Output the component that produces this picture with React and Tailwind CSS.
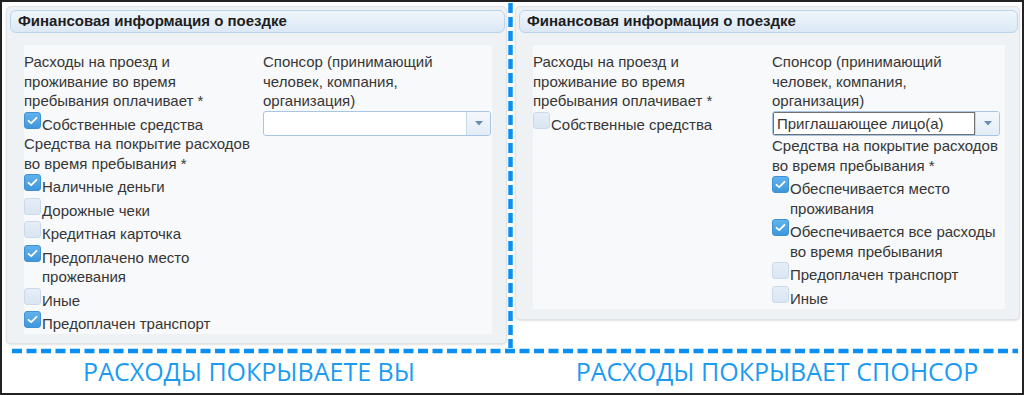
import React from 'react';

const Box = ({ checked }) => (
  <span
    className={`mt-[1px] flex h-[17px] w-[17px] shrink-0 items-center justify-center rounded-[3px] border ${
      checked
        ? 'border-[#3d91d4] bg-gradient-to-b from-[#62b3ec] to-[#3e97db]'
        : 'border-[#cbdaea] bg-gradient-to-b from-[#e6eef7] to-[#d9e5f1]'
    }`}
  >
    {checked && (
      <svg width="11" height="9" viewBox="0 0 11 9">
        <path d="M1.5 4.8 L4.2 7.2 L9.5 1.8" fill="none" stroke="#ffffff" strokeWidth="1.8" strokeLinecap="round" strokeLinejoin="round" />
      </svg>
    )}
  </span>
);

const Option = ({ checked, lines }) => (
  <div className="flex items-start">
    <Box checked={checked} />
    <div className="ml-[1px] pt-[4px]">
      {lines.map((l) => (
        <div key={l} className="whitespace-nowrap">{l}</div>
      ))}
    </div>
  </div>
);

const Lines = ({ lines }) => lines.map((l) => <div key={l} className="whitespace-nowrap">{l}</div>);

const Select = ({ value }) => (
  <div className="mt-[0.5px] flex h-[25px] w-[228px] overflow-hidden rounded-[3px] border border-[#a8c6e4] bg-white">
    <div
      className={`flex flex-1 items-center pl-[3px] ${value ? 'border border-[#707070]' : ''}`}
    >
      {value}
    </div>
    <div className="flex w-[24px] items-center justify-center border-l border-[#c6d8ea] bg-gradient-to-b from-[#f4f8fc] to-[#e3edf7]">
      <svg width="8" height="5" viewBox="0 0 8 5">
        <path d="M0 0 H8 L4 4.5 Z" fill="#6a8db3" />
      </svg>
    </div>
  </div>
);

const Panel = ({ height, left, right }) => (
  <div
    className={`mt-1 flex flex-col rounded-[5px] border border-[#dfe3e8] bg-[#eff2f5] pl-[3px] pr-[1px] pt-[3px] shadow-[0_1px_2px_rgba(0,0,0,0.12)] ${height}`}
  >
    <div className="flex h-[23px] items-center rounded-[6px] border border-[#b9d4ec] bg-gradient-to-b from-[#f0f6fc] to-[#dbe8f5] pl-[7px] text-[15px] font-bold text-[#1e1e1e]">
      Финансовая информация о поездке
    </div>
    <div className="mb-[10px] ml-[14px] mr-[13px] mt-[12px] flex flex-1 bg-[#f8f9fb] pt-[7px] text-[15px] leading-[19.5px] text-[#363636]">
      <div className="w-[239px] shrink-0">{left}</div>
      <div>{right}</div>
    </div>
  </div>
);

export default function App() {
  return (
    <div
      className="h-[395px] w-[1024px] overflow-hidden border-2 border-[#222222] bg-white"
      style={{ fontFamily: '"Liberation Sans", Arial, sans-serif' }}
    >
      <div className="flex items-start pl-1">
        <div className="w-[501px]">
          <Panel
            height="h-[338px]"
            left={
              <>
                <Lines lines={['Расходы на проезд и', 'проживание во время', 'пребывания оплачивает *']} />
                <Option checked lines={['Собственные средства']} />
                <Lines lines={['Средства на покрытие расходов', 'во время пребывания *']} />
                <Option checked lines={['Наличные деньги']} />
                <Option lines={['Дорожные чеки']} />
                <Option lines={['Кредитная карточка']} />
                <Option checked lines={['Предоплачено место', 'прожевания']} />
                <Option lines={['Иные']} />
                <Option checked lines={['Предоплачен транспорт']} />
              </>
            }
            right={
              <>
                <Lines lines={['Спонсор (принимающий', 'человек, компания,', 'организация)']} />
                <Select />
              </>
            }
          />
        </div>
        <svg className="ml-[1px] shrink-0" width="5" height="346" viewBox="0 0 5 346">
          <line x1="2.5" y1="1" x2="2.5" y2="346" stroke="#0b8ff2" strokeWidth="4.5" strokeDasharray="10 4" />
        </svg>
        <div className="ml-[2px] w-[505px]">
          <Panel
            height="h-[314px]"
            left={
              <>
                <Lines lines={['Расходы на проезд и', 'проживание во время', 'пребывания оплачивает *']} />
                <Option lines={['Собственные средства']} />
              </>
            }
            right={
              <>
                <Lines lines={['Спонсор (принимающий', 'человек, компания,', 'организация)']} />
                <Select value="Приглашающее лицо(а)" />
                <Lines lines={['Средства на покрытие расходов', 'во время пребывания *']} />
                <Option checked lines={['Обеспечивается место', 'проживания']} />
                <Option checked lines={['Обеспечивается все расходы', 'во время пребывания']} />
                <Option lines={['Предоплачен транспорт']} />
                <Option lines={['Иные']} />
              </>
            }
          />
        </div>
      </div>
      <svg className="block" width="1020" height="6" viewBox="0 0 1020 6">
        <line x1="10" y1="3" x2="1016" y2="3" stroke="#0b8ff2" strokeWidth="4.5" strokeDasharray="10 4.5" />
      </svg>
      <div
        className="flex h-[34px] items-center text-[25px] leading-none text-[#1c9cf0]"
        style={{ fontFamily: '"Open Sans", sans-serif' }}
      >
        <div className="w-[494px] text-center">РАСХОДЫ ПОКРЫВАЕТЕ ВЫ</div>
        <div className="w-[526px] pl-[36px] text-center">РАСХОДЫ ПОКРЫВАЕТ СПОНСОР</div>
      </div>
    </div>
  );
}
